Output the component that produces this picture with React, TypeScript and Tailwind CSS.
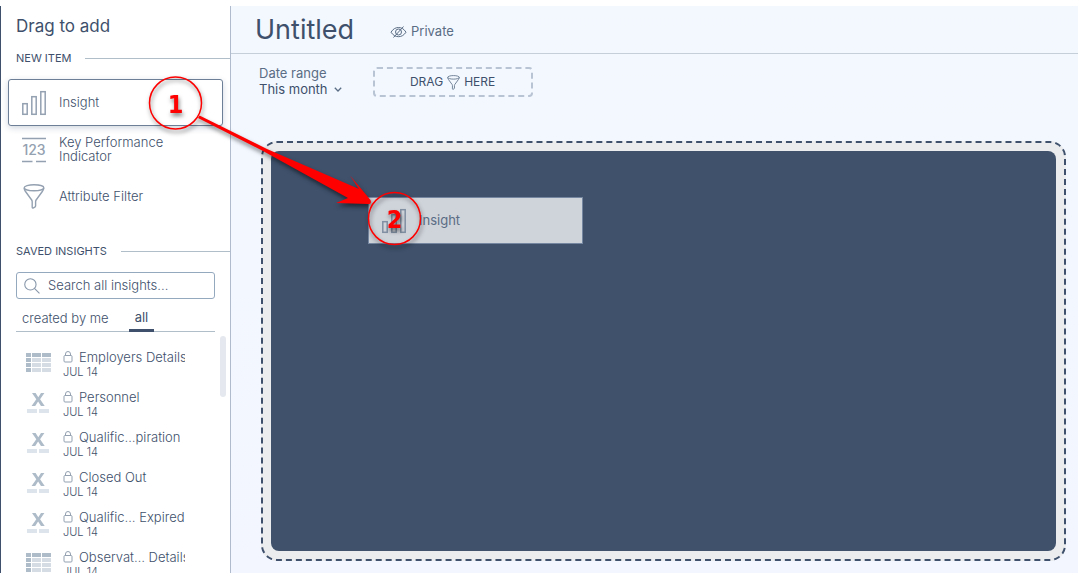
import { ReactNode } from "react";

type InsightKind = "table" | "headline";

const savedInsights: { title: string; date: string; kind: InsightKind }[] = [
  { title: "Employers Details", date: "JUL 14", kind: "table" },
  { title: "Personnel", date: "JUL 14", kind: "headline" },
  { title: "Qualific…piration", date: "JUL 14", kind: "headline" },
  { title: "Closed Out", date: "JUL 14", kind: "headline" },
  { title: "Qualific… Expired", date: "JUL 14", kind: "headline" },
  { title: "Observat… Details", date: "JUL 14", kind: "table" },
];

function BarsIcon({ color = "#94a1b1" }: { color?: string }) {
  return (
    <svg width="26" height="26" viewBox="0 0 26 26" fill="none" stroke={color} strokeWidth="1.5">
      <rect x="1.8" y="13.7" width="4.4" height="10.6" />
      <rect x="10.8" y="6.7" width="4.4" height="17.6" />
      <rect x="19.8" y="1.7" width="4.4" height="22.6" />
    </svg>
  );
}

function KpiIcon() {
  return (
    <svg width="26" height="26" viewBox="0 0 26 26" fill="none" stroke="#94a1b1" strokeWidth="1.3">
      <path d="M1 1.5h24M1 24.5h10.5M15 24.5h10" />
      <text
        x="13"
        y="18"
        textAnchor="middle"
        fontSize="14"
        fill="#94a1b1"
        stroke="none"
        fontFamily="Inter, sans-serif"
        fontWeight="500"
      >
        123
      </text>
    </svg>
  );
}

function FunnelIcon({ className, color = "#94a1b1" }: { className: string; color?: string }) {
  return (
    <svg className={className} viewBox="0 0 22 25" fill="none" stroke={color} strokeWidth="1.4" strokeLinejoin="round">
      <ellipse cx="11" cy="3.8" rx="9.8" ry="3" />
      <path d="M1.2 4c0 1.400.5 2.400 1.300 3.500l6.200 8.500c.4.600.5 1 .5 1.800v5.200c0 .9.500 1.200 1.200.9l1.400-.7c.6-.3.800-.7.800-1.400v-4c0-.8.100-1.200.5-1.800l6.200-8.500c.8-1.100 1.500-2.100 1.500-3.500" />
    </svg>
  );
}

function TableIcon() {
  return (
    <svg width="26" height="20" viewBox="0 0 26 20">
      <path
        fill="#aebbc8"
        d="M0 0h5v4H0zM6 0h9v4H6zM16 0h9v4h-9zM0 5h5v4H0zM0 10h5v4H0zM0 15h5v4H0z"
      />
      <path
        fill="#d6dce3"
        d="M6 5h9v4H6zM16 5h9v4h-9zM6 10h9v4H6zM16 10h9v4h-9zM6 15h9v4H6zM16 15h9v4h-9z"
      />
    </svg>
  );
}

function HeadlineIcon() {
  return (
    <svg width="26" height="20" viewBox="0 0 26 20">
      <path fill="#aebbc8" d="M6 0h3.600l2.700 4.200L15 0h3.400l-4.300 6.300 4.600 6.700H15l-2.900-4.500L9.200 13H5.600l4.700-6.700z" />
      <path fill="#dee4ec" d="M1 16h10v4H1zM13 16h10v4H13z" />
    </svg>
  );
}

function LockIcon() {
  return (
    <svg width="10" height="12" viewBox="0 0 10 12" fill="none" stroke="#94a1b1">
      <rect x="1" y="4.5" width="8" height="6.5" rx="1" />
      <path d="M2.5 4.5v-1.500a2.500 2.500 0 0 1 5 0v1.500" />
    </svg>
  );
}

function HiddenEyeIcon() {
  return (
    <svg width="17" height="12" viewBox="0 0 17 12" fill="none" stroke="#5a6d84">
      <path d="M1 6.200C3 3 5.500 1.500 8.500 1.500S14 3 16 6.200C14 9.200 11.500 10.700 8.500 10.700S3 9.200 1 6.200z" />
      <circle cx="8.500" cy="6" r="3" />
      <path d="M3.500 11.500L13.500.5" />
    </svg>
  );
}

function SectionTitle({ children }: { children: ReactNode }) {
  return (
    <div className="flex h-4 items-center gap-3.5 pl-[15px]">
      <h3 className="text-[11px] leading-4">{children}</h3>
      <span className="h-px flex-1 bg-[#b0beca]" />
    </div>
  );
}

function NewItem({ icon, label, active = false }: { icon: ReactNode; label: string; active?: boolean }) {
  return (
    <button
      className={
        active
          ? "flex h-[47px] w-full items-center gap-3 rounded-[3px] border border-[#6d7f96] bg-white pl-3 text-left shadow-[0_2px_6px_rgba(20,56,93,0.2)]"
          : "flex h-[47px] w-full items-center gap-3 rounded-[3px] border border-transparent pl-3 text-left"
      }
    >
      <span className="flex w-[26px] shrink-0 justify-center">{icon}</span>
      <span className="w-28 pb-0.5 text-[13px] leading-[14px] font-light">{label}</span>
    </button>
  );
}

function Sidebar() {
  return (
    <aside className="flex w-[231px] shrink-0 flex-col border-r border-l border-r-[#b0bccd] border-l-[#3e506b] bg-white">
      <h2 className="mt-2 pl-[15px] text-[17px] leading-6">Drag to add</h2>
      <div className="mt-3">
        <SectionTitle>NEW ITEM</SectionTitle>
      </div>
      <div className="mt-[13px] pr-[7px] pl-[7px]">
        <NewItem icon={<BarsIcon />} label="Insight" active />
        <NewItem icon={<KpiIcon />} label="Key Performance Indicator" />
        <NewItem icon={<FunnelIcon className="h-[25px] w-[22px]" />} label="Attribute Filter" />
      </div>

      <div className="mt-[23px]">
        <SectionTitle>SAVED INSIGHTS</SectionTitle>
      </div>
      <label className="mx-[15px] mt-[13px] flex h-[27px] shrink-0 items-center gap-2 rounded-[3px] border border-[#94a8be] pl-[7px]">
        <svg className="shrink-0" width="16" height="16" viewBox="0 0 15 15" fill="none" stroke="#8595a8">
          <circle cx="6" cy="6" r="5.300" />
          <path d="M9.800 9.800L14.500 14.500" />
        </svg>
        <input
          type="text"
          aria-label="Search all insights"
          placeholder="Search all insights..."
          className="w-full min-w-0 bg-transparent text-[13px] font-light outline-none placeholder:text-[#3e506b]"
        />
      </label>
      <div className="mx-[15px] mt-2 flex h-[25px] shrink-0 gap-3.5 border-b border-[#b0beca] text-[13px]">
        <button className="h-[25px] pb-0.5 pl-1.5 pr-1.5 font-light">created by me</button>
        <button className="h-[25px] border-b-3 border-[#3e506b] px-1.5">all</button>
      </div>

      <div className="mt-1 flex min-h-0 flex-1 justify-between overflow-hidden pr-1">
        <ul className="pt-[13px] pl-[25px]">
          {savedInsights.map((item) => (
            <li key={item.title} className="flex h-10 gap-[11px]">
              <span className="pt-1">{item.kind === "table" ? <TableIcon /> : <HeadlineIcon />}</span>
              <div className="w-[122px] overflow-hidden font-light">
                <a href="#" className="flex items-center gap-1.5 text-[13px] leading-4 whitespace-nowrap">
                  <span className="shrink-0">
                    <LockIcon />
                  </span>
                  {item.title}
                </a>
                <p className="text-[11px] leading-[14px]">{item.date}</p>
              </div>
            </li>
          ))}
        </ul>
        <span className="h-[61px] w-1.5 rounded-full bg-[#e5e9ef]" />
      </div>
    </aside>
  );
}

function Dashboard() {
  return (
    <main className="flex min-w-0 flex-1 flex-col bg-linear-to-b from-[#f3f8ff] to-[#f3f6ff]">
      <header className="flex h-12 shrink-0 items-center gap-9 border-b border-[#c5cfda] pl-6">
        <h1 className="text-[27px] leading-8">Untitled</h1>
        <span className="flex items-center gap-1 pt-1 text-[13px] text-[#5a6d84]">
          <HiddenEyeIcon />
          Private
        </span>
      </header>

      <div className="flex shrink-0 items-start gap-[31px] pt-[11px] pl-7">
        <button className="text-left text-[13px] leading-4">
          <span className="block text-[#5a6d84]">Date range</span>
          <span className="flex items-center gap-1.5">
            This month
            <svg width="8" height="5" viewBox="0 0 8 5" fill="none" stroke="#5a6d84" strokeWidth="1.300">
              <path d="M.8.8L4 4 7.200.8" />
            </svg>
          </span>
        </button>
        <div className="mt-0.5 flex h-[30px] w-40 items-center justify-center gap-1 rounded-[4px] border-2 border-dashed border-[#b8c3d3] text-[12px]">
          DRAG
          <FunnelIcon className="h-[15px] w-[13px]" color="#5a6d84" />
          HERE
        </div>
      </div>

      <section className="mt-11 mr-3 mb-3 ml-[30px] flex flex-1 rounded-2xl border-2 border-dashed border-[#3e506b] bg-[#ebecee] p-2">
        <div className="relative flex-1 rounded-lg bg-[#3f516b]">
          <div className="absolute top-[46px] left-[97px] flex h-[47px] w-[215px] items-center gap-3 border border-[#7587a0] bg-[#cfd3da] pl-3 text-[13px] text-[#5a6d84]">
            <BarsIcon color="#8190a3" />
            Insight
          </div>
        </div>
      </section>
    </main>
  );
}

function DragGuide() {
  return (
    <svg
      className="pointer-events-none absolute top-0 left-0 drop-shadow-[1px_3px_2px_rgba(0,0,0,0.5)]"
      width="440"
      height="260"
      fill="#fe0000"
      fontFamily="'DejaVu Sans Condensed', 'DejaVu Sans', sans-serif"
      fontWeight="700"
      fontSize="25"
      textAnchor="middle"
    >
      <circle cx="175.500" cy="103" r="26" fill="none" stroke="#fe0000" strokeWidth="1.500" />
      <text x="175.500" y="113">
        1
      </text>
      <path d="M199.500 115.500L267 149L359 189L350 175.500L370.500 200Q372 204 368 204L336 203L348 198L263 151L198 118Z" />
      <circle cx="394.500" cy="218.500" r="26" fill="none" stroke="#fe0000" strokeWidth="1.500" />
      <text x="394.500" y="228">
        2
      </text>
    </svg>
  );
}

export default function App() {
  return (
    <div className="relative flex h-screen overflow-hidden bg-white pt-1.5 font-[Inter,sans-serif] text-[#3e506b]">
      <Sidebar />
      <Dashboard />
      <DragGuide />
    </div>
  );
}
